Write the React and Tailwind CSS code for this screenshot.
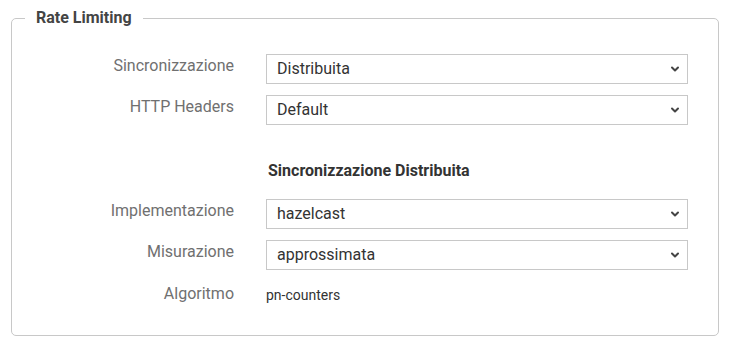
import { ChevronDown } from 'lucide-react';

function Select({ value }) {
  return (
    <div className="relative w-[422px] h-[30px] border border-[#c8c8c8] bg-white flex items-center">
      <span className="pl-[10px] text-[16px] text-[#333]">{value}</span>
      <ChevronDown className="absolute right-[6px] top-[8px] w-[12px] h-[12px] text-[#444]" strokeWidth={4} />
    </div>
  );
}

function Row({ label, children, align = 'select' }) {
  return (
    <div className="flex items-start">
      <div
        className={`w-[222px] text-right text-[16px] leading-[22px] text-[#707070] ${
          align === 'select' ? 'pt-[1px]' : 'pt-[2px]'
        }`}
      >
        {label}
      </div>
      <div className={`ml-[32px] ${align === 'select' ? '' : 'pt-[2px]'}`}>{children}</div>
    </div>
  );
}

export default function App() {
  return (
    <div className="bg-white w-[733px] h-[346px] pt-[7px] pl-[11px]" style={{ fontFamily: 'Roboto, "Liberation Sans", sans-serif' }}>
      <fieldset className="w-[708px] h-[329px] border border-[#c8c8c8] rounded-[5px] pl-0">
        <legend className="ml-[13px] px-[11px] text-[16px] font-bold text-[#444] leading-[22px]">
          Rate Limiting
        </legend>

        <div className="pt-[25px] space-y-[11px]">
          <Row label="Sincronizzazione">
            <Select value="Distribuita" />
          </Row>
          <Row label="HTTP Headers">
            <Select value="Default" />
          </Row>
        </div>

        <div className="mt-[35px] ml-[256px] text-[16px] font-bold text-[#333] leading-[22px]">
          Sincronizzazione Distribuita
        </div>

        <div className="mt-[17px] space-y-[11px]">
          <Row label="Implementazione">
            <Select value="hazelcast" />
          </Row>
          <Row label="Misurazione">
            <Select value="approssimata" />
          </Row>
          <Row label="Algoritmo" align="text">
            <span className="text-[14px] text-[#333] leading-[22px]">pn-counters</span>
          </Row>
        </div>
      </fieldset>
    </div>
  );
}
